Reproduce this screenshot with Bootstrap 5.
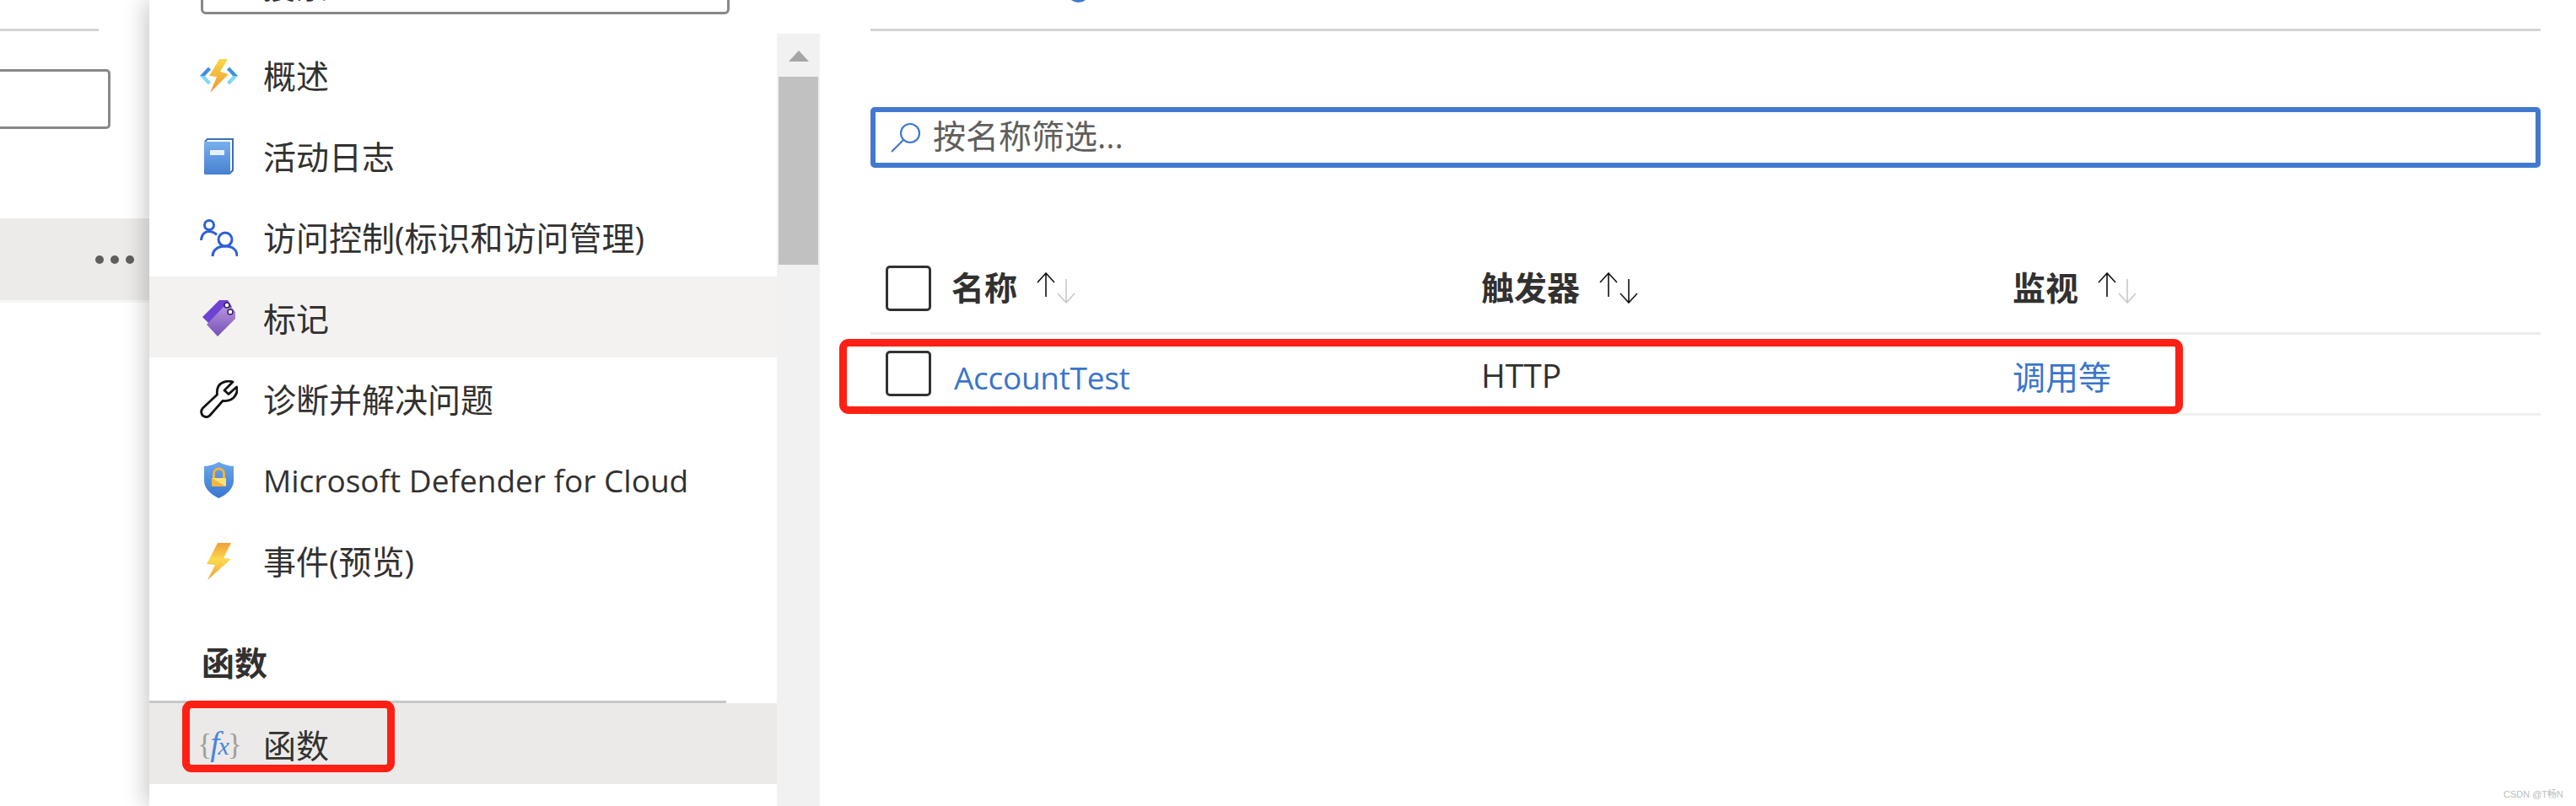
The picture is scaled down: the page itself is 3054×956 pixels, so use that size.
<!DOCTYPE html>
<html lang="zh-CN">

<head>
    <meta charset="UTF-8">
    <meta name="viewport" content="width=device-width, initial-scale=1.0">
    <title>函数</title>
    <link href="https://cdn.jsdelivr.net/npm/bootstrap@5.3.0/dist/css/bootstrap.min.css" rel="stylesheet">
    <style>
        body {
            font-family: "Open Sans", "Noto Sans CJK SC", sans-serif;
            font-size: 39px;
            line-height: 48px;
            color: #323130;
            background: #fff;
        }

        .lat-text { font-size: 37px; }

        /* left blade, mostly cut off */
        .left-blade { width: 177px; flex: none; }
        .left-line { height: 3px; width: 117px; margin-top: 34px; background: #d4d4d4; }
        .left-input { height: 71px; width: 141px; margin: 45px 0 0 -10px; border: 3px solid #8a8886; border-radius: 5px; }
        .left-row { height: 97px; margin-top: 106px; background: #ecebe9; border-bottom: 3px solid #f6f6f6; box-sizing: content-box; padding-right: 18px; }
        .left-dot { width: 10px; height: 10px; border-radius: 50%; background: #605e5c; }

        /* resource menu */
        .menu-pane { width: 795px; flex: none; background: #fff; box-shadow: -6px 0 24px rgba(0, 0, 0, .2); }
        .menu-main { width: 744px; flex: none; }
        .menu-top { height: 40px; overflow: hidden; }
        .menu-search { height: 60px; margin: -43px 56px 0 61px; padding-left: 70px; line-height: 45px; border: 3px solid #8a8886; border-radius: 6px; }
        .menu-row.list-group-item { height: 96px; padding: 3px 0 0 60px; border: 0; border-radius: 0; color: #323130; display: flex; align-items: center; background: transparent; }
        .menu-row.hovered { background: #f3f2f1; }
        .menu-row.picked { background: #ebeae8; position: relative; }
        .menu-ico { width: 45px; flex: none; margin-right: 30px; display: flex; justify-content: center; line-height: 0; }
        .menu-head { height: 64px; margin-right: 60px; padding: 55px 0 0 62px; font-weight: 700; line-height: 38px; border-bottom: 3px solid #c8c8c8; box-sizing: content-box; }
        .fx-mark { font-family: "Liberation Serif", serif; line-height: 34px; white-space: nowrap; letter-spacing: -2px; }
        .fx-mark i { color: #4b84dc; font-size: 40px; }
        .fx-mark b { color: #a0a0a0; font-weight: 400; font-size: 36px; }
        .fx-mark .fx-x { font-size: 30px; }

        .scroll-track { width: 51px; flex: none; margin-top: 40px; background: #f1f1f1; }
        .scroll-up { height: 51px; padding-top: 20px; line-height: 0; }
        .scroll-thumb { height: 223px; margin: 0 2px; background: #c1c1c1; }

        /* function list */
        .list-pane { background: #fff; padding: 0 42px 0 60px; min-width: 0; }
        .tool-crop { height: 37px; overflow: hidden; border-bottom: 3px solid #d4d4d4; }
        .tool-inner { margin-top: -45px; height: 48px; color: #605e5c; line-height: 36px; }
        .tool-inner span { margin-bottom: 5px; }
        .tool-gap { margin-left: 61px; }
        .filter-box { height: 72px; margin-top: 90px; padding-left: 18px; border: 6px solid #4279cf; border-radius: 5px; color: #605e5c; }
        .filter-box svg { margin-right: 14px; }
        .filter-box span { margin-top: -5px; }

        .list-wrap { margin-top: 91px; }
        .fn-table { table-layout: fixed; margin: 0; width: 100%; }
        .fn-table th, .fn-table td { padding: 0; vertical-align: middle; color: #323130; background: transparent; box-shadow: none; }
        .fn-table th { height: 105px; font-weight: 700; border-bottom: 3px solid #ececec; }
        .fn-table th .sort-cell { margin-top: -2px; }
        .fn-table td { height: 96px; border-bottom: 3px solid #f0f0f0; }
        .fn-table .w-check { width: 96px; padding-left: 18px; }
        .fn-table .w-name { width: 628px; }
        .fn-table .w-trig { width: 630px; }
        .fn-check.form-check-input { width: 54px; height: 54px; margin: 0; display: block; border: 3.5px solid #323130; border-radius: 5px; background-color: #fff; }
        .fn-table td.low-cell { padding-top: 8px; }
        .fn-table td.http-cell { padding-top: 3px; }
        .fn-link { color: #3a75cb; text-decoration: none; }
        .fn-name { margin-left: 3px; letter-spacing: -.3px; }
        .sort-ico { margin-left: 22px; margin-top: 2px; }
        .sort-ico .off { stroke: #c8c8c8; }

        /* the hand-drawn red marks */
        .red-mark { position: absolute; border: 9px solid #fe2014; border-radius: 11px; pointer-events: none; }
        .mark-menu { left: 39px; top: -3px; width: 252px; height: 85px; }
        .mark-row { left: -37px; top: 112px; width: 1593px; height: 89px; }

        .csdn-tag { position: absolute; right: 15px; bottom: 6px; font: 11px/16px "Liberation Sans", "Noto Sans CJK SC", sans-serif; color: #bdbdbd; }
    </style>
</head>

<body class="d-flex vh-100 overflow-hidden position-relative">
    <div class="left-blade">
        <div class="left-line"></div>
        <div class="left-input"></div>
        <div class="left-row d-flex align-items-center justify-content-end gap-2">
            <span class="left-dot"></span><span class="left-dot"></span><span class="left-dot"></span>
        </div>
    </div>

    <div class="menu-pane d-flex">
        <div class="menu-main">
            <div class="menu-top">
                <div class="menu-search">搜索</div>
            </div>
            <div class="list-group list-group-flush">
                <a class="list-group-item menu-row" href="#">
                    <span class="menu-ico">
                        <svg width="45" height="40" viewBox="0 0 45 40">
                            <defs>
                                <linearGradient id="gBolt" x1="0" y1="0" x2="0" y2="1"><stop offset="0" stop-color="#fcd64a"/><stop offset="1" stop-color="#ea962e"/></linearGradient>
                            </defs>
                            <path d="M0 20 10 9.5 13 12.5 6 20Z" fill="#3f8fdc"/>
                            <path d="M0 20H6L13 27.5 10 30.5Z" fill="#7fd8f5"/>
                            <path d="M45 20 35 9.5 32 12.5 39 20Z" fill="#3f8fdc"/>
                            <path d="M45 20H39L32 27.5 35 30.5Z" fill="#7fd8f5"/>
                            <path d="M23 0H33L24 15 34 18 12 40 20 21 11 20Z" fill="url(#gBolt)"/>
                        </svg>
                    </span>概述
                </a>
                <a class="list-group-item menu-row" href="#">
                    <span class="menu-ico">
                        <svg width="35" height="43" viewBox="0 0 35 43">
                            <defs>
                                <linearGradient id="gBook" x1="0" y1="0" x2="0" y2="1"><stop offset="0" stop-color="#78b0f0"/><stop offset="1" stop-color="#4780cf"/></linearGradient>
                            </defs>
                            <path d="M1 4 4 1H34V38L30 42" fill="#fff" stroke="#3f6fb5" stroke-width="2"/>
                            <rect y="4" width="31" height="39" rx="1" fill="url(#gBook)"/>
                            <rect x="7" y="14" width="17" height="6" fill="#e8f1fb"/>
                        </svg>
                    </span>活动日志
                </a>
                <a class="list-group-item menu-row" href="#">
                    <span class="menu-ico">
                        <svg width="45" height="44" viewBox="0 0 45 44" fill="none" stroke="#2e5fd6" stroke-width="3">
                            <circle cx="11" cy="7" r="5.5"/>
                            <path d="M1.5 25C2 18 6 14.5 11 14.5 14 14.5 17 15.5 20 18.5"/>
                            <circle cx="30" cy="24" r="8"/>
                            <path d="M15 44C15 36 22 32 30 32 38 32 44 36 44 44"/>
                        </svg>
                    </span>访问控制(标识和访问管理)
                </a>
                <a class="list-group-item menu-row hovered" href="#">
                    <span class="menu-ico">
                        <svg width="40" height="43" viewBox="0 0 40 43">
                            <defs>
                                <linearGradient id="gTag" x1="0" y1="0" x2="0" y2="1"><stop offset="0" stop-color="#b593dd"/><stop offset="1" stop-color="#7650b5"/></linearGradient>
                            </defs>
                            <path d="M0 20 20 0H30L35 8 10 30Z" fill="#6f42d6"/>
                            <path d="M5 29 25 8 35 9 39 14V22L18 43Z" fill="url(#gTag)"/>
                            <circle cx="29" cy="6" r="3" fill="#fff" stroke="#32205f" stroke-width="1.5"/>
                            <circle cx="33" cy="14" r="3" fill="#fff" stroke="#32205f" stroke-width="1.5"/>
                        </svg>
                    </span>标记
                </a>
                <a class="list-group-item menu-row" href="#">
                    <span class="menu-ico">
                        <svg width="45" height="45" viewBox="0 0 45 45" fill="none" stroke="#111" stroke-width="2.8" stroke-linejoin="round">
                            <path d="M39 2C33 0 25 2 22 7 20 11 20 14 20.5 17L3.5 33C0 37 2 42 5.5 43 8 44.5 10 43.5 12 41.5L27 24.5C33 25 39 23 42 18 44 15 44.5 11 43.5 8L34 16.5 29 12Z"/>
                        </svg>
                    </span>诊断并解决问题
                </a>
                <a class="list-group-item menu-row" href="#">
                    <span class="menu-ico">
                        <svg width="35" height="43" viewBox="0 0 35 43">
                            <defs>
                                <linearGradient id="gShield" x1="0" y1="0" x2="0" y2="1"><stop offset="0" stop-color="#6ca7ec"/><stop offset="1" stop-color="#3a76d0"/></linearGradient>
                                <linearGradient id="gLock" x1="0" y1="1" x2="1" y2="0"><stop offset=".5" stop-color="#f3b73f"/><stop offset=".5" stop-color="#ffe074"/></linearGradient>
                            </defs>
                            <path d="M17.5 0C12 3 6 4.500 0 5V22C0 32 9 39 17.500 43 26 39 35 32 35 22V5C29 4.500 23 3 17.500 0Z" fill="url(#gShield)"/>
                            <path d="M11.500 19V14C11.500 6 23.500 6 23.500 14V19" fill="none" stroke="#f2b33d" stroke-width="3"/>
                            <rect x="9" y="19" width="17" height="10" rx="1" fill="url(#gLock)"/>
                        </svg>
                    </span><span class="lat-text">Microsoft Defender for Cloud</span>
                </a>
                <a class="list-group-item menu-row" href="#">
                    <span class="menu-ico">
                        <svg width="29" height="44" viewBox="0 0 29 44">
                            <defs>
                                <linearGradient id="gEvent" x1="0" y1="0" x2="0" y2="1"><stop offset="0" stop-color="#ee9f3a"/><stop offset=".45" stop-color="#fcd94e"/><stop offset="1" stop-color="#ee9f3a"/></linearGradient>
                            </defs>
                            <path d="M13 0H29L20 18 29 19 1 44 10 26 0 25Z" fill="url(#gEvent)"/>
                        </svg>
                    </span>事件(预览)
                </a>
                <div class="menu-head">函数</div>
                <a class="list-group-item menu-row picked" href="#">
                    <span class="menu-ico"><span class="fx-mark"><b>{</b><i>f</i><i class="fx-x">x</i><b>}</b></span></span>函数
                    <span class="red-mark mark-menu"></span>
                </a>
            </div>
        </div>
        <div class="scroll-track">
            <div class="scroll-up d-flex justify-content-center">
                <svg width="24" height="13" viewBox="0 0 24 13"><path d="M12 0 24 13H0Z" fill="#a6a6a6"/></svg>
            </div>
            <div class="scroll-thumb"></div>
        </div>
    </div>

    <div class="list-pane flex-grow-1">
        <div class="tool-crop">
            <div class="tool-inner d-flex align-items-end">
                <span class="ms-5">+</span>
                <span class="ms-4">创建</span>
                <svg class="tool-gap" width="27" height="27" viewBox="0 0 27 27" fill="none" stroke="#3f78cf" stroke-width="3"><circle cx="13.500" cy="13.500" r="12"/></svg>
                <span class="ms-5">刷新</span>
            </div>
        </div>

        <div class="filter-box d-flex align-items-center">
            <svg width="36" height="36" viewBox="0 0 36 36" fill="none" stroke="#3f78cf" stroke-width="2.200">
                <circle cx="23" cy="13" r="11"/>
                <path d="M15 21 1 35"/>
            </svg>
            <span>按名称筛选...</span>
        </div>

        <div class="list-wrap position-relative">
            <table class="table fn-table">
                <thead>
                    <tr>
                        <th class="w-check"><input class="form-check-input fn-check" type="checkbox"></th>
                        <th class="w-name">
                            <div class="sort-cell d-flex align-items-center">名称
                                <svg class="sort-ico" width="48" height="37" viewBox="0 0 48 37" fill="none" stroke="#111" stroke-width="1.600">
                                    <path d="M12 29V1M2 12 12 1 22 12"/><path class="off" d="M36 8V36M26 25 36 36 46 25"/>
                                </svg>
                            </div>
                        </th>
                        <th class="w-trig">
                            <div class="sort-cell d-flex align-items-center">触发器
                                <svg class="sort-ico" width="48" height="37" viewBox="0 0 48 37" fill="none" stroke="#111" stroke-width="1.600">
                                    <path d="M12 29V1M2 12 12 1 22 12"/><path d="M36 8V36M26 25 36 36 46 25"/>
                                </svg>
                            </div>
                        </th>
                        <th>
                            <div class="sort-cell d-flex align-items-center">监视
                                <svg class="sort-ico" width="48" height="37" viewBox="0 0 48 37" fill="none" stroke="#111" stroke-width="1.600">
                                    <path d="M12 29V1M2 12 12 1 22 12"/><path class="off" d="M36 8V36M26 25 36 36 46 25"/>
                                </svg>
                            </div>
                        </th>
                    </tr>
                </thead>
                <tbody>
                    <tr>
                        <td class="w-check"><input class="form-check-input fn-check" type="checkbox"></td>
                        <td class="low-cell"><a class="fn-link fn-name lat-text" href="#">AccountTest</a></td>
                        <td class="http-cell">HTTP</td>
                        <td class="low-cell"><a class="fn-link" href="#">调用等</a></td>
                    </tr>
                </tbody>
            </table>
            <div class="red-mark mark-row"></div>
        </div>
    </div>

    <div class="csdn-tag">CSDN @T畅N</div>

    <script src="https://cdn.jsdelivr.net/npm/bootstrap@5.3.0/dist/js/bootstrap.bundle.min.js"></script>
</body>

</html>
